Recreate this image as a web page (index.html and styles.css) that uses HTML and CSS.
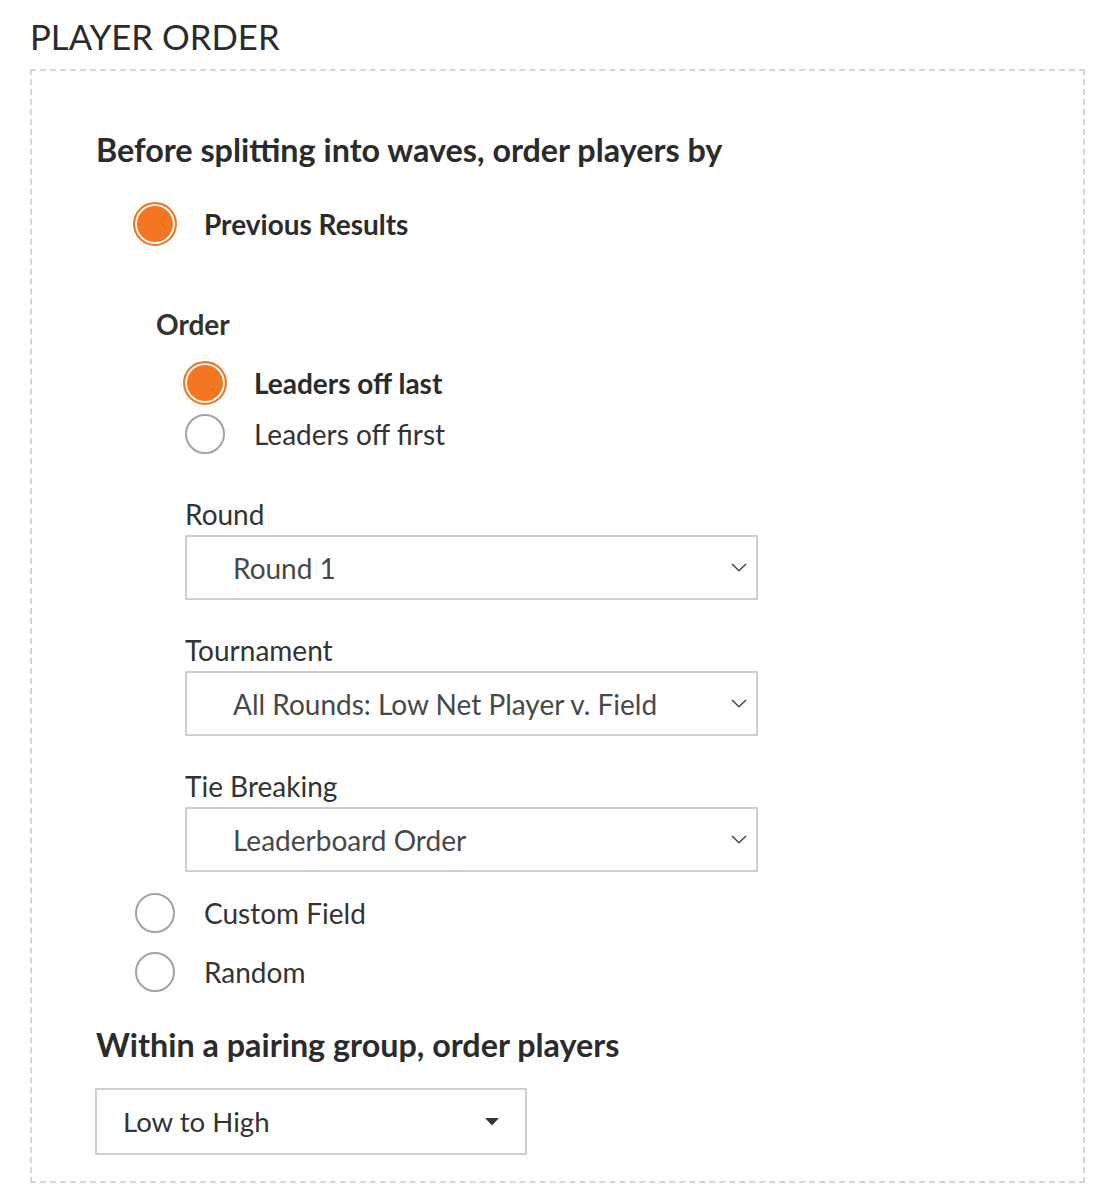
FILE: index.html
```html
<!DOCTYPE html>
<html>
<head>
<meta charset="utf-8">
<link rel="stylesheet" href="styles.css">
</head>
<body>
<h1 class="title">PLAYER ORDER</h1>
<div class="panel">
  <h2 class="heading">Before splitting into waves, order players by</h2>
  <div class="options">
    <div class="radio-row">
      <span class="radio-slot"><span class="radio checked"></span></span>
      <span class="radio-label bold">Previous Results</span>
    </div>
    <div class="sub">
      <div class="sub-title">Order</div>
      <div class="sub-options">
        <div class="radio-row tight">
          <span class="radio-slot"><span class="radio checked"></span></span>
          <span class="radio-label bold">Leaders off last</span>
        </div>
        <div class="radio-row tight">
          <span class="radio-slot"><span class="radio"></span></span>
          <span class="radio-label">Leaders off first</span>
        </div>
      </div>
      <div class="field">
        <div class="field-label">Round</div>
        <div class="select">
          <span class="select-text">Round 1</span>
          <svg class="chevron" width="16" height="9" viewBox="0 0 16 9"><path d="M1 1 L8 7.8 L15 1" fill="none" stroke="#444" stroke-width="1.5"/></svg>
        </div>
      </div>
      <div class="field">
        <div class="field-label">Tournament</div>
        <div class="select">
          <span class="select-text">All Rounds: Low Net Player v. Field</span>
          <svg class="chevron" width="16" height="9" viewBox="0 0 16 9"><path d="M1 1 L8 7.8 L15 1" fill="none" stroke="#444" stroke-width="1.5"/></svg>
        </div>
      </div>
      <div class="field">
        <div class="field-label">Tie Breaking</div>
        <div class="select">
          <span class="select-text">Leaderboard Order</span>
          <svg class="chevron" width="16" height="9" viewBox="0 0 16 9"><path d="M1 1 L8 7.8 L15 1" fill="none" stroke="#444" stroke-width="1.5"/></svg>
        </div>
      </div>
    </div>
    <div class="radio-row">
      <span class="radio-slot"><span class="radio"></span></span>
      <span class="radio-label">Custom Field</span>
    </div>
    <div class="radio-row">
      <span class="radio-slot"><span class="radio"></span></span>
      <span class="radio-label">Random</span>
    </div>
  </div>
  <h2 class="heading second">Within a pairing group, order players</h2>
  <div class="dropdown">
    <span class="dropdown-text">Low to High</span>
    <svg class="caret" width="14" height="8" viewBox="0 0 14 8"><path d="M0 0 L14 0 L7 7.5 Z" fill="#333"/></svg>
  </div>
</div>
</body>
</html>
```
FILE: styles.css
```css
* { box-sizing: border-box; }
body {
  margin: 0;
  background: #fff;
  font-family: Lato, "Open Sans", Arial, sans-serif;
  color: #2e2e2e;
}
.title {
  margin: 0;
  padding: 17px 0 0 30px;
  height: 69px;
  font-size: 34.7px;
  line-height: 40px;
  font-weight: 400;
  color: #2b2b2b;
}
.panel {
  margin-left: 30px;
  width: 1055px;
  border: 2px dashed #d6d6d6;
  padding: 59px 0 26px 64px;
}
.heading {
  margin: 0;
  font-size: 32.3px;
  line-height: 40px;
  font-weight: 700;
  color: #2b2b2b;
}
.heading.second { margin-top: 31px; }
.options {
  margin-top: 32px;
  padding-left: 37px;
}
.radio-row {
  display: flex;
  align-items: center;
  height: 44px;
  margin-bottom: 15px;
}
.radio-row.tight { height: 50px; margin-bottom: 1px; }
.radio-slot {
  width: 44px;
  height: 44px;
  display: flex;
  align-items: center;
  justify-content: center;
  flex: none;
}
.radio {
  display: block;
  width: 40px;
  height: 40px;
  border-radius: 50%;
  border: 2px solid #a3a3a3;
  background: #fff;
}
.radio.checked {
  width: 44px;
  height: 44px;
  border: 2px solid #f47623;
  background: #f47623;
  box-shadow: inset 0 0 0 2px #fff;
}
.radio-label {
  margin-left: 27px;
  font-size: 28px;
  line-height: 34px;
  color: #333;
}
.radio-label.bold { font-weight: 700; color: #2b2b2b; }
.sub {
  padding-left: 23px;
  margin-top: 60px;
  margin-bottom: 19px;
}
.sub-title {
  font-size: 28px;
  line-height: 36px;
  font-weight: 700;
  color: #333;
}
.sub-options {
  margin-top: 16px;
  padding-left: 27px;
}
.field {
  margin-left: 29px;
  margin-top: 40px;
}
.field + .field { margin-top: 35px; }
.field-label {
  font-size: 28px;
  line-height: 30px;
  color: #333;
  margin-bottom: 6px;
}
.select {
  width: 573px;
  height: 65px;
  border: 2px solid #cfcfcf;
  display: flex;
  align-items: center;
  justify-content: space-between;
  padding: 0 9px 0 46px;
}
.select-text {
  font-size: 28px;
  line-height: 34px;
  color: #484848;
}
.chevron { display: block; }
.dropdown {
  margin-top: 23px;
  margin-left: -1px;
  width: 432px;
  height: 67px;
  border: 2px solid #cfcfcf;
  display: flex;
  align-items: center;
  justify-content: space-between;
  padding: 0 26px 0 26px;
}
.dropdown-text {
  font-size: 27.6px;
  color: #333;
}
.caret { display: block; }
```
